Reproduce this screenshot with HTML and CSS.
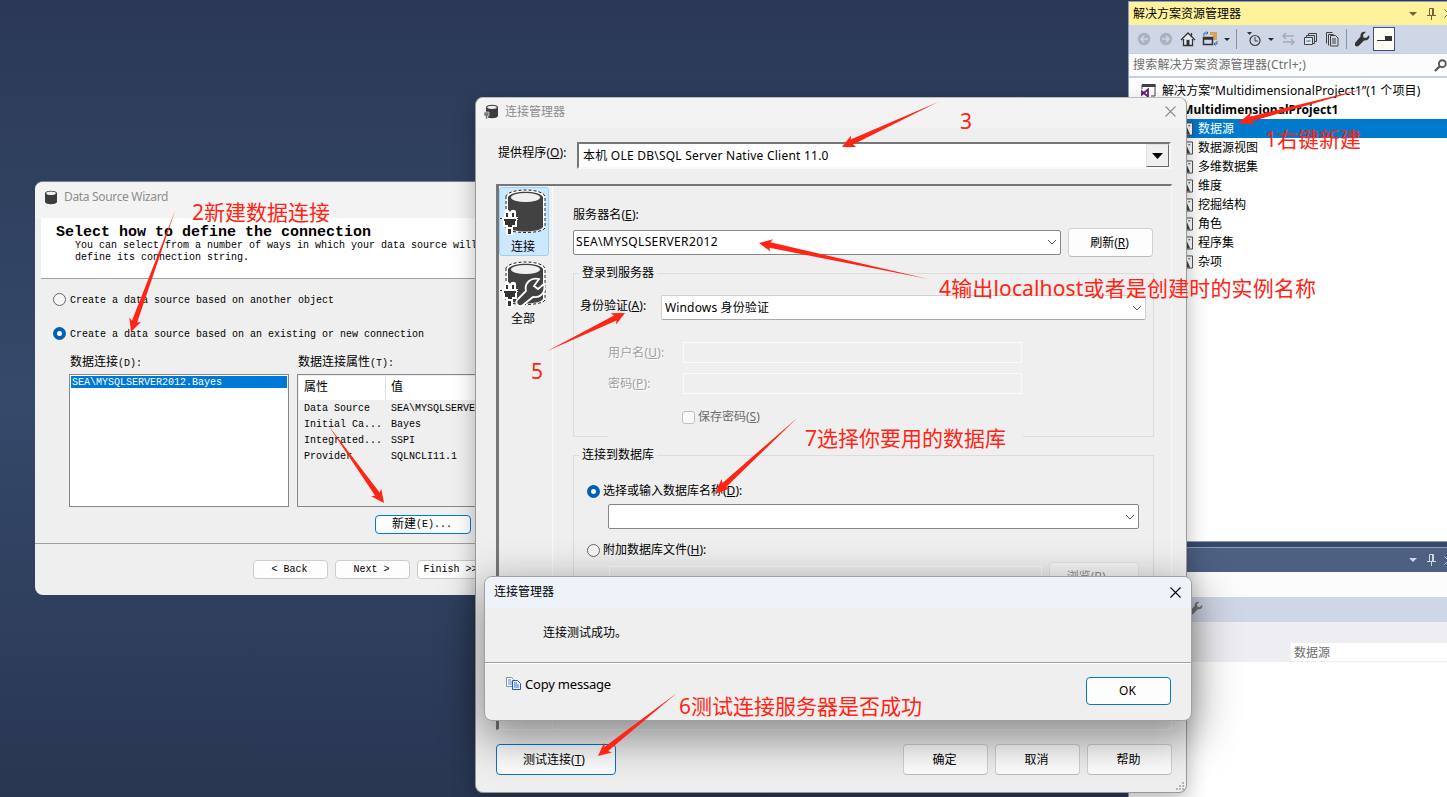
FILE: index.html
```html
<!DOCTYPE html>
<html lang="zh-CN">
<head>
    <meta charset="UTF-8">
    <title>连接管理器</title>
    <link rel="stylesheet" href="styles.css">
</head>
<body>

<!-- shared icons -->
<svg width="0" height="0" class="defs">
    <symbol id="wrench" viewBox="0 0 16 16"><path d="M15 4.2 12.2 7 9.4 6.4 9 3.8 11.8 1C9 0 6 2 6.500 5.500L1 12v2.500L2.500 15.500 4.500 15 10 9.500C13.500 10 16.300 7 15 4.200z" fill="currentColor"/></symbol>
    <symbol id="pin" viewBox="0 0 9 12"><path d="M2.500 7V.5h4V7M5.500 1v6M0 7.500h9M4.500 8v4" fill="none" stroke="currentColor"/></symbol>
    <symbol id="chev" viewBox="0 0 10 6"><path d="M1 1l4 4 4-4" fill="none" stroke="#555"/></symbol>
    <symbol id="cross" viewBox="0 0 11 11"><path d="M.5.5l10 10M10.500.5l-10 10" fill="none" stroke="currentColor" stroke-width="1.1"/></symbol>
    <symbol id="database" viewBox="0 0 48 48">
        <path d="M7 8v32c3 6 36 6 39 0V8C42 0 11 0 7 8z" fill="#fff" stroke="#222" stroke-dasharray="3 2"/>
        <path d="M9 9v30c3 6 32 6 35 0V9C40 2 13 2 9 9z" fill="#424242"/>
        <ellipse cx="26.500" cy="9.500" rx="14.500" ry="4.500" fill="#f0f0f0"/>
        <path d="M3 29h2v-5c0-3 5-3 6 0 1-3 6-3 6 0v5h2v3h-1v7h-4v8H7v-8H4v-7H3z" fill="#fff"/>
        <path d="M5 31h12v2h-1v4h-3v2H9v-2H6v-4H5zM7 25h2v4H7zM13 25h2v4h-2zM9 41h3v5H9zM1 30h2v1H1zM18 30h2v1h-2z" fill="#333"/>
    </symbol>
    <symbol id="folder" viewBox="0 0 14 14"><path d="M0 .5h13.500v13H0" fill="#fff" stroke="#424242"/><path d="M0 4h7l4 9H0zM9 3h2v1H9z" fill="#424242"/></symbol>
</svg>

<div class="desktop">

    <div class="studio">
        <div class="tool-title active">
            <span>解决方案资源管理器</span>
            <i class="caret"></i>
            <svg class="pin"><use href="#pin"/></svg>
            <svg class="tool-close"><use href="#cross"/></svg>
        </div>
        <div class="toolbar">
            <svg class="ico" viewBox="0 0 16 16"><circle cx="8" cy="8" r="6.200" fill="#acb2bd"/><path d="M12 8H5M8 5L5 8l3 3" stroke="#cfd6e5" stroke-width="1.600" fill="none"/></svg>
            <svg class="ico" viewBox="0 0 16 16"><circle cx="8" cy="8" r="6.200" fill="#acb2bd"/><path d="M4 8h7M8 5l3 3-3 3" stroke="#cfd6e5" stroke-width="1.600" fill="none"/></svg>
            <svg class="ico" viewBox="0 0 16 16"><path d="M1 9l7-7 7 7M3.500 8v6.500h9V8M11.500 2v3" fill="#e6e9f2" stroke="#333" stroke-width="1.300"/><path d="M6.500 9h3v6h-3z" fill="#333"/></svg>
            <svg class="ico" viewBox="0 0 16 16"><path d="M8 1h7v8h-4V4H8z" fill="#dca055"/><path d="M1.500 6.500h9v7h-9zM1.500 8h9" fill="none" stroke="#333" stroke-width="1.500"/><path d="M2 5V2h4M4.500.5L6 2 4.500 3.500M15 10v3h-3M13.500 11.500L12 13l1.500 1.500" fill="none" stroke="#1b6fb5"/></svg>
            <i class="caret dark"></i>
            <i class="sep"></i>
            <svg class="ico" viewBox="0 0 16 16"><circle cx="9" cy="9.500" r="5" fill="none" stroke="#424242" stroke-width="1.200"/><path d="M9 6v4h3" fill="none" stroke="#424242"/><path d="M1 1h5L3.500 4z" fill="#333"/></svg>
            <i class="caret dark"></i>
            <svg class="ico" viewBox="0 0 16 16"><path d="M14 5H3M6 2L3 5l3 3M3 11h11M11 8l3 3-3 3" fill="none" stroke="#a4abb9" stroke-width="1.600"/></svg>
            <svg class="ico" viewBox="0 0 16 16"><path d="M6.500 4.500v-2h8v8h-2M4.500 6.500v-2h8v8h-2" fill="none" stroke="#424242"/><path d="M2.500 6.500h8v7h-8z" fill="#dde3ee" stroke="#424242"/><path d="M4.500 10h4" stroke="#1b6fb5"/></svg>
            <svg class="ico" viewBox="0 0 16 16"><path d="M2.500 12.500v-11h6M4.500 14.500v-11h5M6.500 4.500h5l2.500 2.500v8H6.500zM8 8h4M8 10h4M8 12h4" fill="none" stroke="#424242"/></svg>
            <i class="sep last"></i>
            <svg class="ico wrench"><use href="#wrench"/></svg>
            <span class="toggle"><svg width="16" height="8"><path d="M1 6h15V1H9v4H1z" fill="#333"/></svg></span>
        </div>
        <div class="search">
            <span>搜索解决方案资源管理器(Ctrl+;)</span>
            <svg viewBox="0 0 14 14" width="13" height="13"><circle cx="9" cy="5" r="3.700" fill="none" stroke="#555" stroke-width="2"/><path d="M6.500 7.500L1 13" stroke="#555" stroke-width="2.400"/></svg>
        </div>
        <div class="tree">
            <div class="node root"><svg viewBox="0 0 15 14" width="15" height="14"><path d="M1 5V1h13v11H10" fill="none" stroke="#424242"/><path d="M1 0h13.500v3H1z" fill="#424242"/><path d="M1 7.500l6 5v-7l-6 5z" fill="none" stroke="#68217a" stroke-width="1.800"/></svg><span>解决方案“MultidimensionalProject1”(1 个项目)</span></div>
            <div class="node project"><span>MultidimensionalProject1</span></div>
            <div class="node item selected"><svg><use href="#folder"/></svg>数据源</div>
            <div class="node item"><svg><use href="#folder"/></svg>数据源视图</div>
            <div class="node item"><svg><use href="#folder"/></svg>多维数据集</div>
            <div class="node item"><svg><use href="#folder"/></svg>维度</div>
            <div class="node item"><svg><use href="#folder"/></svg>挖掘结构</div>
            <div class="node item"><svg><use href="#folder"/></svg>角色</div>
            <div class="node item"><svg><use href="#folder"/></svg>程序集</div>
            <div class="node item"><svg><use href="#folder"/></svg>杂项</div>
        </div>
        <div class="splitter"></div>
        <div class="tool-title">
            <i class="caret"></i>
            <svg class="pin"><use href="#pin"/></svg>
            <svg class="tool-close"><use href="#cross"/></svg>
        </div>
        <div class="prop-object"></div>
        <div class="prop-toolbar"><svg class="ico"><use href="#wrench"/></svg></div>
        <div class="prop-head"></div>
        <div class="prop-row"><span>数据源</span></div>
        <div class="prop-rest"></div>
    </div>

    <div class="window wizard">
        <div class="wizard-title">
            <svg viewBox="0 0 14 15" width="14" height="15"><path d="M1 3v9c1 3 11 3 12 0V3C12 0 2 0 1 3z" fill="#3c3c3c"/><ellipse cx="7" cy="3.300" rx="4.800" ry="1.800" fill="#eee"/></svg>
            <span>Data Source Wizard</span>
        </div>
        <div class="wizard-head">
            <h1>Select how to define the connection</h1>
            <p>You can select from a number of ways in which your data source will<br>define its connection string.</p>
        </div>
        <div class="wizard-body">
            <div class="choice"><i class="radio"></i><span>Create a data source based on another object</span></div>
            <div class="choice second"><i class="radio on"></i><span>Create a data source based on an existing or new connection</span></div>
            <div class="lists">
                <div class="connections">
                    <div class="list-label"><b>数据连接</b>(D):</div>
                    <div class="listbox"><div class="option">SEA\MYSQLSERVER2012.Bayes</div></div>
                </div>
                <div class="properties">
                    <div class="list-label"><b>数据连接属性</b>(T):</div>
                    <div class="grid">
                        <div class="grid-row grid-head"><span>属性</span><span>值</span></div>
                        <div class="grid-row"><span>Data Source</span><span>SEA\MYSQLSERVER2012</span></div>
                        <div class="grid-row"><span>Initial Ca...</span><span>Bayes</span></div>
                        <div class="grid-row"><span>Integrated...</span><span>SSPI</span></div>
                        <div class="grid-row"><span>Provider</span><span>SQLNCLI11.1</span></div>
                    </div>
                </div>
            </div>
            <div class="wbtn new"><b>新建</b>(E)...</div>
        </div>
        <div class="wizard-foot">
            <div class="wbtn">&lt; Back</div>
            <div class="wbtn">Next &gt;</div>
            <div class="wbtn">Finish &gt;&gt;|</div>
        </div>
    </div>

    <div class="window manager">
        <div class="manager-title">
            <svg viewBox="0 0 14 15" width="14" height="15"><path d="M2 3v9c1 3 11 3 12 0V3C13 0 3 0 2 3z" fill="#3c3c3c"/><ellipse cx="8" cy="3.300" rx="4.800" ry="1.600" fill="#eee"/><path d="M0 8h5v4H3.500v3h-2v-3H0z" fill="#777" stroke="#eee" stroke-width=".6"/></svg>
            <span>连接管理器</span>
            <svg class="close"><use href="#cross"/></svg>
        </div>
        <div class="provider">
            <label>提供程序(<u>O</u>):</label>
            <div class="classic-combo"><span>本机 OLE DB\SQL Server Native Client 11.0</span><i><svg width="11" height="6"><path d="M0 0h11L5.500 6z"/></svg></i></div>
        </div>
        <div class="panel">
            <div class="side">
                <div class="tab current"><svg><use href="#database"/></svg>连接</div>
                <div class="tab"><svg viewBox="0 0 48 48"><use href="#database"/><path d="M45 24l-6 5-4-3 5-7c-8-2-15 4-13 12l-9 9c-2 4 2 8 6 5l10-8c8 1 13-5 11-13z" fill="#424242" stroke="#fff" stroke-width="1.800"/></svg>全部</div>
            </div>
            <div class="form">
                <label class="server-label">服务器名(<u>E</u>):</label>
                <div class="server-row">
                    <div class="combo server">SEA\MYSQLSERVER2012<svg><use href="#chev"/></svg></div>
                    <div class="btn">刷新(<u>R</u>)</div>
                </div>
                <fieldset class="login">
                    <legend>登录到服务器</legend>
                    <div class="auth"><label>身份验证(<u>A</u>):</label><div class="combo light">Windows 身份验证<svg><use href="#chev"/></svg></div></div>
                    <div class="cred"><label>用户名(<u>U</u>):</label><div class="field"></div></div>
                    <div class="cred password"><label>密码(<u>P</u>):</label><div class="field"></div></div>
                    <div class="save"><i class="check"></i>保存密码(<u>S</u>)</div>
                </fieldset>
                <fieldset class="database">
                    <legend>连接到数据库</legend>
                    <div class="pick"><i class="radio on"></i>选择或输入数据库名称(<u>D</u>):</div>
                    <div class="combo"><svg><use href="#chev"/></svg></div>
                    <div class="pick attach"><i class="radio"></i>附加数据库文件(<u>H</u>):</div>
                    <div class="file-row"><div class="field"></div><div class="btn disabled">浏览(<u>B</u>)...</div></div>
                </fieldset>
            </div>
        </div>
        <div class="manager-foot">
            <div class="btn test">测试连接(<u>T</u>)</div>
            <div class="btn">确定</div>
            <div class="btn">取消</div>
            <div class="btn">帮助</div>
        </div>
        <svg class="grip" width="8" height="8"><path d="M6 0h2v2H6zM3 3h2v2H3zM6 3h2v2H6zM0 6h2v2H0zM3 6h2v2H3zM6 6h2v2H6z" fill="#b5b5b5"/></svg>
    </div>

    <div class="window message">
        <div class="message-title"><span>连接管理器</span><svg class="close"><use href="#cross"/></svg></div>
        <div class="message-text">连接测试成功。</div>
        <div class="message-foot">
            <svg viewBox="0 0 15 13" width="15" height="13"><path d="M.5.5h5l2 2v7h-7z" fill="#fff" stroke="#7d8fc4"/><path d="M2 3h3M2 5h4M2 7h4" stroke="#5c83d6"/><path d="M6.500 3.500h5l3 3v6h-8z" fill="#e9f0ff" stroke="#3155a8"/><path d="M8 6h3M8 8h5M8 10h5" stroke="#3b74d8"/></svg>
            <span>Copy message</span>
            <div class="btn ok">OK</div>
        </div>
    </div>

    <!-- red notes over the windows -->
    <svg class="arrows" width="1447" height="797">
        <path transform="translate(1238 123) rotate(164.900)" d="M0 0l-16-6 3 4L-134 0l121 3-3 4z"/>
        <path transform="translate(131 332) rotate(110)" d="M0 0l-13-6 2 3.500L-129 0l118 3-2 3.500z"/>
        <path transform="translate(384 503) rotate(54.300)" d="M0 0l-13-6 2 3.500L-96 0l85 3-2 3.500z"/>
        <path transform="translate(842 147) rotate(154.900)" d="M0 0l-13-6 2 3.500L-106 0l95 3-2 3.500z"/>
        <path transform="translate(759 243) rotate(-168)" d="M0 0l-13-6 2 3.500L-173 0l162 3-2 3.500z"/>
        <path transform="translate(625 313) rotate(-26)" d="M0 0l-13-6 2 3.500L-87 0l76 3-2 3.500z"/>
        <path transform="translate(715 494) rotate(137.200)" d="M0 0l-15-6 2 3.500L-112 0l99 3-2 3.500z"/>
        <path transform="translate(598 756) rotate(141.400)" d="M0 0l-13-6 2 3.500L-101 0l90 3-2 3.500z"/>
    </svg>
    <div class="note n1">1右键新建</div>
    <div class="note n2">2新建数据连接</div>
    <div class="note n3">3</div>
    <div class="note n4">4输出localhost或者是创建时的实例名称</div>
    <div class="note n5">5</div>
    <div class="note n6">6测试连接服务器是否成功</div>
    <div class="note n7">7选择你要用的数据库</div>
</div>

</body>
</html>
```
FILE: styles.css
```css
* {
    box-sizing: border-box;
}
body {
    margin: 0;
    font: 12px/16px "Noto Sans", "Noto Sans CJK SC", sans-serif;
    color: #000;
    overflow: hidden;
}
.defs {
    position: absolute;
}
svg {
    display: block;
    flex: none;
}
.desktop {
    position: relative;
    width: 1447px;
    height: 797px;
    overflow: hidden;
    background: linear-gradient(#2b3956, #35496a 50%, #293652);
    white-space: nowrap;
}

/* docked panels */
.studio {
    position: absolute;
    left: 1128px;
    top: 1px;
    width: 330px;
    height: 796px;
    border-left: 1px solid #8e9bbc;
    display: flex;
    flex-direction: column;
    background: #fff;
}
.tool-title {
    height: 24px;
    flex: none;
    display: flex;
    align-items: center;
    justify-content: flex-end;
    background: #4d6082;
    color: #cfd6e5;
    padding: 0 5px 0 4px;
}
.tool-title.active {
    background: #fff29d;
    color: #000;
    border-top: 1px solid #8e9bbc;
}
.tool-title span {
    margin-right: auto;
}
.tool-title svg,
.tool-title .caret {
    color: #cfd6e5;
}
.tool-title.active svg,
.tool-title.active .caret {
    color: #75633d;
}
.caret {
    flex: none;
    border: 4px solid transparent;
    border-top-color: currentColor;
    border-bottom: 0;
}
.pin {
    width: 9px;
    height: 12px;
    margin: 0 8px 0 10px;
}
.tool-close {
    width: 9px;
    height: 9px;
}
.toolbar {
    height: 28px;
    flex: none;
    display: flex;
    align-items: center;
    background: #cfd6e5;
    padding-left: 7px;
}
.ico {
    width: 16px;
    height: 16px;
    margin-right: 6px;
}
.caret.dark {
    border-width: 3px;
    border-bottom: 0;
    color: #1b293e;
    margin-right: 6px;
}
.sep {
    width: 1px;
    height: 20px;
    background: #8591a8;
    margin-right: 9px;
}
.sep.last {
    margin-right: 7px;
}
.toolbar .wrench {
    margin-right: 3px;
    color: #333;
}
.toggle {
    width: 22px;
    height: 24px;
    border: 1px solid #3d5277;
    background: #fffcf4;
    display: flex;
    align-items: center;
    justify-content: center;
}
.search {
    height: 25px;
    flex: none;
    display: flex;
    align-items: center;
    justify-content: space-between;
    border: 1px solid #c8cfdd;
    border-width: 1px 0 2px;
    background: #fcfcfc;
    color: #6d6d6d;
    padding: 0 11px 0 4px;
    letter-spacing: .2px;
}
.tree {
    height: 463px;
    padding-top: 3px;
    flex: none;
}
.node {
    height: 19px;
    display: flex;
    align-items: center;
}
.root {
    padding-left: 12px;
}
.root span {
    margin-left: 6px;
    letter-spacing: .12px;
}
.project {
    padding-left: 53px;
    font-weight: bold;
    letter-spacing: .1px;
}
.item {
    padding-left: 51px;
}
.item svg {
    width: 13px;
    height: 14px;
    margin-right: 5px;
}
.selected {
    background: #007acc;
    color: #fff;
}
.splitter {
    height: 7px;
    flex: none;
    background: #35496a;
    border-top: 1px solid #8e9bbc;
    border-bottom: 1px solid #8e9bbc;
}
.prop-object {
    height: 25px;
    background: #fcfcfc;
}
.prop-toolbar {
    height: 25px;
    background: #cfd6e5;
    padding: 4px 0 0 60px;
    color: #777;
}
.prop-toolbar .ico {
    width: 14px;
    height: 14px;
}
.prop-head {
    height: 21px;
    background: #eeeef2;
}
.prop-row {
    height: 19px;
    background: #eeeef2;
    padding-left: 162px;
}
.prop-row span {
    display: block;
    height: 18px;
    line-height: 19px;
    padding-left: 3px;
    background: #fff;
    color: #6d6d6d;
}
.prop-rest {
    flex: 1;
    background: #fff;
}

/* windows on the desktop */
.window {
    position: absolute;
    background: #efefef;
    border-radius: 8px;
    overflow: hidden;
    display: flex;
    flex-direction: column;
}
.radio {
    width: 13px;
    height: 13px;
    flex: none;
    border: 1px solid #666;
    border-radius: 50%;
    background: #f5f5f5;
}
.radio.on {
    border: 4px solid #005fb8;
    background: #fff;
}
.btn {
    display: flex;
    align-items: center;
    justify-content: center;
    white-space: pre;
    border: 1px solid #d0d0d0;
    border-bottom-color: #bbb;
    border-radius: 4px;
    background: #fdfdfd;
    padding-right: 2px;
}

.wizard {
    left: 35px;
    top: 181px;
    width: 480px;
    height: 414px;
    border-top: 1px solid #777f90;
    font: 10px/12px "Liberation Mono", "Noto Sans CJK SC", monospace;
}
.wizard b {
    font-size: 12px;
    font-weight: normal;
}
.wizard-title {
    height: 36px;
    display: flex;
    align-items: center;
    padding: 0 0 6px 9px;
    background: #f3f3f3;
    color: #8d8d8d;
    font: 12px/16px "Noto Sans", sans-serif;
    letter-spacing: -.33px;
}
.wizard-title span {
    margin-left: 6px;
}
.wizard-head {
    height: 61px;
    margin-left: 6px;
    padding: 8px 0 0 15px;
    background: #fff;
    border-bottom: 1px solid #a0a0a0;
}
.wizard-head h1 {
    margin: 0;
    font-size: 15px;
    line-height: 14px;
}
.wizard-head p {
    margin: 0 0 0 19px;
}
.wizard-body {
    height: 265px;
    padding: 14px 0 0 18px;
    border-bottom: 1px solid #a0a0a0;
}
.choice {
    display: flex;
    align-items: flex-start;
    height: 14px;
}
.choice .radio {
    margin-right: 4px;
}
.choice span {
    padding-top: 2px;
}
.choice.second {
    margin-top: 20px;
}
.lists {
    display: flex;
    margin: 15px 0 0 16px;
}
.connections {
    width: 228px;
}
.properties {
    flex: 1;
}
.list-label {
    height: 17px;
    padding: 1px 0 0 1px;
}
.listbox {
    width: 220px;
    height: 133px;
    margin-top: 1px;
    padding: 1px;
    background: #fff;
    border: 1px solid #828790;
}
.option {
    background: #0078d7;
    color: #fff;
    padding-left: 1px;
    line-height: 13px;
    height: 12px;
}
.grid {
    height: 133px;
    margin-top: 1px;
    padding: 1px;
    border: 1px solid #828790;
}
.grid-row {
    display: flex;
    height: 16px;
    line-height: 16px;
    padding-left: 5px;
}
.grid-row span:first-child {
    width: 87px;
}
.grid-head {
    height: 24px;
    margin-bottom: 1px;
    background: #fff;
    line-height: 25px;
    font-size: 12px;
}
.grid-head span:first-child {
    width: 82px;
    border-right: 1px solid #e0e0e0;
    margin-right: 5px;
}
.wbtn {
    width: 75px;
    height: 19px;
    border: 1px solid #ccc;
    border-radius: 4px;
    background: #fdfdfd;
    display: flex;
    align-items: center;
    justify-content: center;
    white-space: pre;
    padding-right: 2px;
}
.wbtn.new {
    width: 96px;
    margin: 8px 0 0 322px;
    border-color: #0078d4;
}
.wizard-foot {
    display: flex;
    gap: 7px;
    padding: 16px 0 0 218px;
}

.manager {
    left: 475px;
    top: 97px;
    width: 712px;
    height: 696px;
    border: 1px solid #9a9a9a;
    border-top-color: #bbb;
    box-shadow: 0 8px 22px rgba(0, 0, 0, .28);
}
.manager-title {
    height: 30px;
    flex: none;
    display: flex;
    align-items: center;
    background: #f3f3f3;
    color: #8d8d8d;
    padding: 0 10px 3px 8px;
}
.manager-title span {
    margin: 0 auto 0 7px;
}
.close {
    width: 11px;
    height: 11px;
}
.provider {
    display: flex;
    padding: 14px 14px 0 22px;
    height: 56px;
}
.provider label {
    width: 79px;
    padding-top: 3px;
    letter-spacing: .1px;
}
.classic-combo {
    width: 594px;
    height: 27px;
    display: flex;
    justify-content: space-between;
    align-items: center;
    background: #fff;
    border: 2px solid;
    border-color: #777 #f8f8f8 #f8f8f8 #777;
    padding-left: 4px;
    letter-spacing: .23px;
}
.classic-combo i {
    width: 23px;
    height: 23px;
    display: flex;
    align-items: center;
    justify-content: center;
    background: #f0f0f0;
    border: 1px solid;
    border-color: #e3e3e3 #696969 #696969 #e3e3e3;
}
.panel {
    width: 676px;
    height: 546px;
    flex: none;
    margin-left: 20px;
    display: flex;
    border: 1px solid #f8f8f8;
    border-top: 2px solid #777;
    border-left: 3px solid #777;
}
.side {
    width: 54px;
    padding-top: 1px;
    border-right: 1px solid #fafafa;
}
.tab {
    width: 50px;
    height: 69px;
    margin-bottom: 3px;
    border: 1px solid transparent;
    border-radius: 3px;
    text-align: center;
    padding-right: 2px;
}
.tab svg {
    width: 48px;
    height: 48px;
    margin: 0 -1px 3px;
}
.current {
    background: #cce8ff;
    border-color: #99d1ff;
}
.form {
    padding: 21px 17px 0 20px;
    flex: 1;
}
.server-label {
    display: block;
    letter-spacing: .1px;
}
.server-row {
    display: flex;
    align-items: center;
    margin-top: 5px;
    gap: 7px;
}
.combo {
    display: flex;
    align-items: center;
    justify-content: space-between;
    width: 488px;
    height: 25px;
    padding: 0 3px 0 3px;
    border: 1px solid #868686;
    border-radius: 2px;
    background: #fff;
}
.combo.server {
    padding: 0 3px 2px 2px;
    letter-spacing: .37px;
}
.combo svg {
    width: 10px;
    height: 6px;
    margin-left: auto;
}
.server-row .btn {
    width: 85px;
    height: 29px;
}
fieldset {
    position: relative;
    width: 581px;
    margin: 0;
    padding: 0;
    border: 1px solid #dcdcdc;
}
legend {
    margin-left: 5px;
    padding: 0 3px;
    height: 16px;
}
.login {
    height: 172px;
    margin-top: 8px;
}
.login::after {
    content: "";
    position: absolute;
    left: 34px;
    bottom: -1px;
    width: 415px;
    height: 1px;
    background: #efefef;
}
.auth {
    display: flex;
    padding-left: 6px;
    margin-top: 14px;
}
.auth label {
    width: 81px;
    padding-top: 3px;
}
.combo.light {
    width: 485px;
    border-color: #d0d0d0;
    border-bottom-color: #aaa;
    letter-spacing: .15px;
}
.cred {
    display: flex;
    align-items: center;
    height: 21px;
    margin-top: 22px;
    padding-left: 34px;
    color: #a0a0a0;
    text-shadow: 1px 1px #fff;
}
.cred label {
    width: 75px;
    letter-spacing: .15px;
}
.password {
    margin-top: 10px;
}
.field {
    width: 339px;
    height: 21px;
    border: 1px solid #fafafa;
}
.save {
    display: flex;
    align-items: center;
    margin: 15px 0 0 108px;
    color: #6d6d6d;
}
.check {
    width: 13px;
    height: 13px;
    border: 1px solid #c0c0c0;
    border-radius: 3px;
    background: #f9f9f9;
    margin-right: 3px;
}
.database {
    height: 230px;
    margin-top: 10px;
}
.pick {
    display: flex;
    align-items: center;
    margin: 20px 0 5px 13px;
}
.pick .radio {
    margin-right: 3px;
}
.database .combo {
    width: 531px;
    margin-left: 34px;
}
.pick.attach {
    margin: 13px 0 4px 13px;
}
.file-row {
    display: flex;
    align-items: center;
    gap: 7px;
    padding-left: 35px;
}
.file-row .field {
    width: 433px;
}
.file-row .btn {
    width: 90px;
    height: 29px;
    border-color: #e4e4e4;
    background: #f7f7f7;
    padding-right: 6px;
}
.disabled {
    color: #8d8d8d;
}
.manager-foot {
    display: flex;
    gap: 7px;
    padding: 14px 0 0 20px;
}
.manager-foot .btn {
    width: 85px;
    height: 31px;
}
.manager-foot .btn.test {
    width: 120px;
    margin-right: 280px;
    padding-right: 4px;
    border-color: #0078d4;
}
.grip {
    position: absolute;
    right: 2px;
    bottom: 2px;
}

.message {
    left: 484px;
    top: 576px;
    width: 708px;
    height: 145px;
    border: 1px solid #a0a0a0;
    box-shadow: 0 14px 44px 4px rgba(0, 0, 0, .42);
}
.message-title {
    height: 31px;
    display: flex;
    align-items: center;
    justify-content: space-between;
    background: #eef3fa;
    padding: 0 10px 1px 9px;
}
.message-text {
    height: 55px;
    padding: 17px 0 0 58px;
    border-bottom: 1px solid #a0a0a0;
}
.message-foot {
    flex: 1;
    display: flex;
    align-items: flex-start;
    padding: 13px 20px 0 21px;
    border-top: 1px solid #fff;
}
.message-foot span {
    margin: -1px auto 0 4px;
    font-size: 13px;
    letter-spacing: -.2px;
}
.ok {
    width: 85px;
    height: 28px;
    border-color: #0078d4;
}

/* notes */
.arrows {
    position: absolute;
    left: 0;
    top: 0;
    fill: #ff2413;
}
.note {
    position: absolute;
    font-size: 21px;
    line-height: 26px;
    color: #ff2413;
}
.n1 { left: 1265px; top: 126px; }
.n2 { left: 192px; top: 199px; }
.n3 { left: 960px; top: 108px; }
.n4 { left: 939px; top: 275px; letter-spacing: .15px; }
.n5 { left: 531px; top: 358px; }
.n6 { left: 679px; top: 693px; }
.n7 { left: 805px; top: 425px; }
```
